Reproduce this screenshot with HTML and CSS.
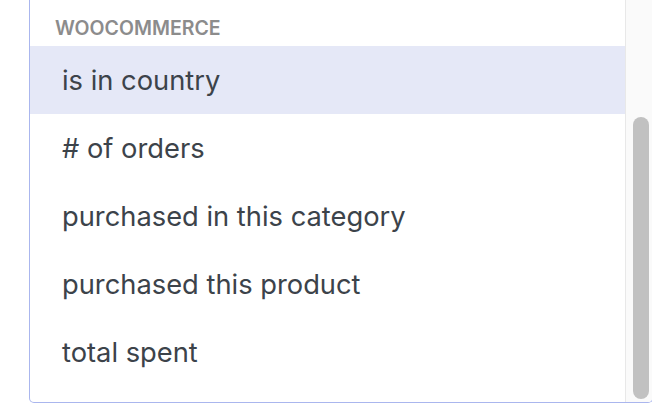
FILE: index.html
```html
<!DOCTYPE html>
<html>
<head>
<meta charset="utf-8">
<link rel="stylesheet" href="styles.css">
</head>
<body>
<div class="box">
  <div class="list">
    <div class="group">WooCommerce</div>
    <div class="row active">is in country</div>
    <div class="row"># of orders</div>
    <div class="row">purchased in this category</div>
    <div class="row">purchased this product</div>
    <div class="row">total spent</div>
  </div>
  <div class="track"><div class="thumb"></div></div>
</div>
</body>
</html>
```

FILE: styles.css
```css
html, body {
  margin: 0;
  padding: 0;
  background: #fff;
  overflow: hidden;
}
body {
  width: 652px;
  height: 410px;
  font-family: Inter, "Noto Sans", sans-serif;
}
.box {
  margin-left: 29px;
  width: 624px;
  height: 403px;
  box-sizing: border-box;
  border: 1px solid #aab6ee;
  border-top: none;
  border-radius: 0 0 5px 5px;
  display: flex;
  overflow: hidden;
}
.list {
  width: 595px;
  flex: none;
  display: flex;
  flex-direction: column;
}
.group {
  height: 46px;
  box-sizing: border-box;
  padding: 17px 0 0 25px;
  font-size: 19.5px;
  font-weight: 600;
  text-transform: uppercase;
  color: #8c8c8c;
  line-height: 22px;
}
.row {
  height: 68px;
  display: flex;
  align-items: center;
  padding-left: 32px;
  font-size: 27.3px;
  color: #3c434a;
}
.row.active {
  background: #e5e8f7;
}
.track {
  flex: none;
  width: 27px;
  box-sizing: border-box;
  border-left: 1px solid #e8e8e8;
  background: #fafafa;
  padding-left: 7px;
}
.thumb {
  margin-top: 117px;
  width: 16px;
  height: 282px;
  border-radius: 8px;
  background: #c1c1c1;
}
```
